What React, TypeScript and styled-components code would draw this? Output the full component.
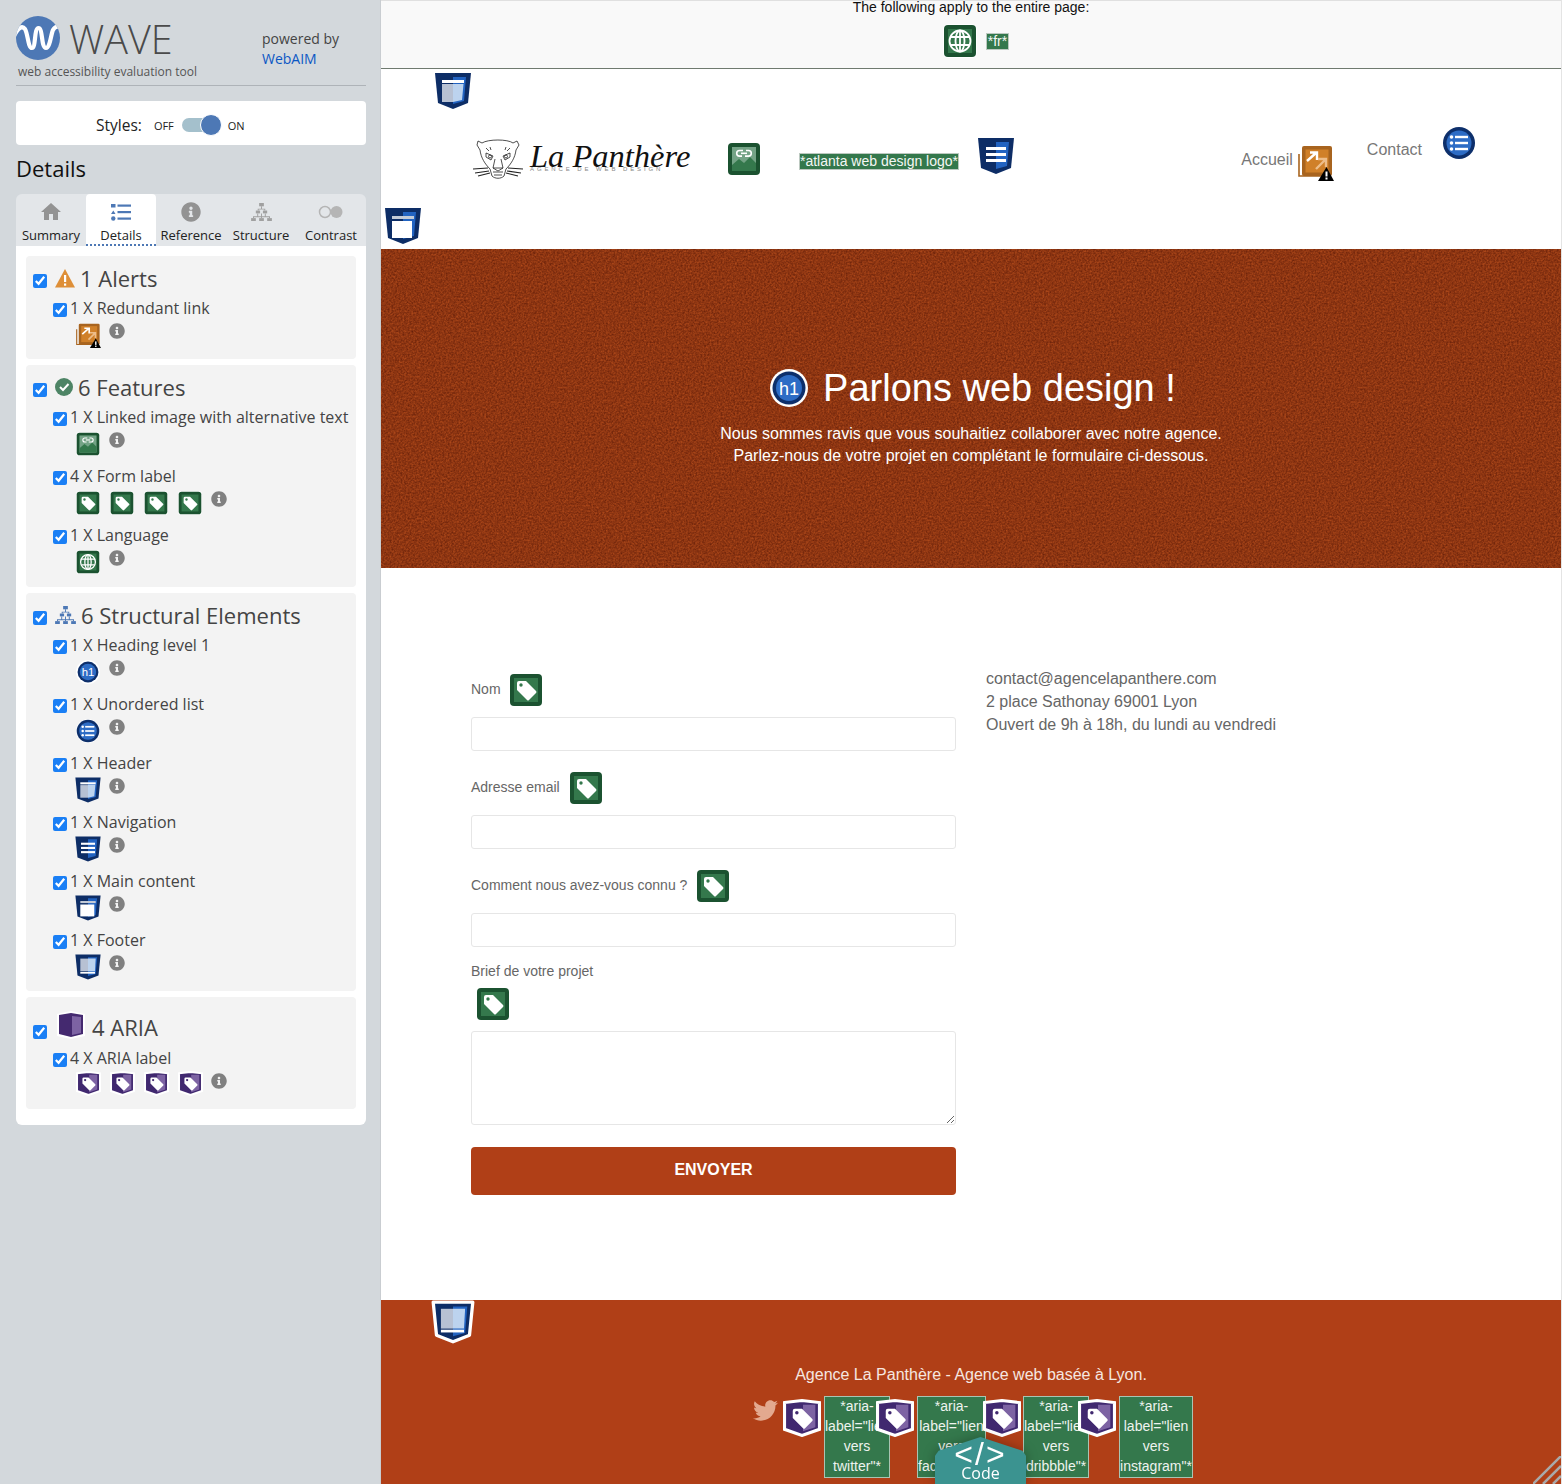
import React from 'react';
import styled, { createGlobalStyle } from 'styled-components';
import { FaInfoCircle, FaTwitter } from 'react-icons/fa';
import { MdHome } from 'react-icons/md';

const GlobalStyle = createGlobalStyle`
	html, body {
		margin: 0;
		padding: 0;
		height: 1484px;
		overflow: hidden;
		background: #fff;
	}
	* {
		box-sizing: border-box;
	}
	svg {
		flex: none;
	}
`;

const Page = styled.div`
	display: flex;
	width: 1562px;
	height: 1484px;
	overflow: hidden;
`;

/* ---------- icons ---------- */

type Size = { size: number };

const TagGlyph = ({ dot }: { dot: string }) => (
	<>
		<path d="M8 10a2 2 0 0 1 2-2h7l10 10q1 1 0 2l-7 7q-1 1-2 0L8 17z" fill="#fff" />
		<circle cx="12" cy="12" r="1.7" fill={dot} />
	</>
);

const Tile = ({ size, children }: Size & { children: React.ReactNode }) => (
	<svg width={size} height={size} viewBox="0 0 34 34" style={{ display: 'block' }}>
		<rect width="34" height="34" rx="5" fill="#fff" />
		<rect x="1" y="1" width="32" height="32" rx="4" fill="#1b5230" />
		<rect x="5" y="5" width="24" height="24" fill="#34784c" />
		{children}
	</svg>
);

const TagTile = ({ size }: Size) => (
	<Tile size={size}>
		<TagGlyph dot="#34784c" />
	</Tile>
);

const LinkTile = ({ size }: Size) => (
	<Tile size={size}>
		<rect x="5" y="5" width="24" height="24" fill="#74a386" />
		<path d="M5 29v-6l7-6 5 4 6-6 6 6v8z" fill="#34784c" />
		<g fill="none" stroke="#fff" strokeWidth="1.6">
			<path d="M16 8.500h-3.500a2.800 2.800 0 0 0 0 5.600H15" />
			<path d="M18 14.100h3.500a2.800 2.800 0 0 0 0-5.600H19" />
			<path d="M14 11.300h6" />
		</g>
	</Tile>
);

const GlobeTile = ({ size }: Size) => (
	<Tile size={size}>
		<g fill="none" stroke="#fff" strokeWidth="1.8">
			<circle cx="17" cy="17" r="10.5" />
			<ellipse cx="17" cy="17" rx="4.5" ry="10.5" />
			<path d="M17 6.5v21M7.5 13h19M7.5 21h19" />
		</g>
	</Tile>
);

type ShieldKind = 'header' | 'nav' | 'main' | 'footer';

const Shield = ({ size, kind, ring }: Size & { kind: ShieldKind; ring?: boolean }) => (
	<svg width={size} height={size} viewBox="-2 -2 40 40" style={{ display: 'block' }}>
		<path
			d="M0 0H36L33 30 18 36 3 30Z"
			fill="#0d2d66"
			stroke="#fff"
			strokeWidth={ring ? 3 : 0}
			strokeLinejoin="round"
		/>
		<path d="M18 4H31L29 28 18 31Z" fill="#2263c1" />
		{kind === 'header' && (
			<>
				<rect x="7" y="11" width="11" height="18" fill="#b7c1d3" />
				<path d="M18 11H28.500L27 27 18 29Z" fill="#bcd3ee" />
				<rect x="7" y="7" width="22" height="3" fill="#fff" />
			</>
		)}
		{kind === 'nav' && (
			<g fill="#fff">
				<rect x="8" y="9" width="20" height="3" />
				<rect x="8" y="15" width="20" height="3" />
				<rect x="8" y="21" width="20" height="3" />
			</g>
		)}
		{kind === 'main' && (
			<>
				<rect x="7" y="8" width="22" height="3" fill="#c3cbd8" />
				<rect x="7" y="13" width="20" height="17" fill="#fff" />
			</>
		)}
		{kind === 'footer' && (
			<>
				<rect x="7" y="6" width="11" height="18" fill="#b7c1d3" />
				<path d="M18 6H29L28 24H18Z" fill="#bcd3ee" />
				<rect x="7" y="25" width="21" height="2.500" fill="#fff" />
			</>
		)}
	</svg>
);

const AriaTag = ({ size }: Size) => (
	<svg width={size} height={size} viewBox="-1.500 -1.500 37 37" style={{ display: 'block' }}>
		<path d="M0 2 17 0 34 2V28L17 34 0 28Z" fill="#40286f" stroke="#fff" strokeWidth="3" strokeLinejoin="miter" />
		<path d="M18 4H30V26L18 30Z" fill="#7d63a3" />
		<TagGlyph dot="#40286f" />
	</svg>
);

const AriaCube = () => (
	<svg width="28" height="28" viewBox="0 0 28 28" style={{ display: 'block' }}>
		<path d="M0 3 14 0 28 3V25L14 28 0 25Z" fill="#fff" />
		<path d="M2 4 14 2V26L2 23Z" fill="#44296f" />
		<path d="M14 2 26 4V23L14 26Z" fill="#44296f" />
		<path d="M15 5 24 6V22L15 24Z" fill="#7d63a3" />
	</svg>
);

const ListCircle = ({ size }: Size) => (
	<svg width={size} height={size} viewBox="0 0 34 34" style={{ display: 'block' }}>
		<circle cx="17" cy="17" r="17" fill="#fff" />
		<circle cx="17" cy="17" r="16" fill="#0d2f6b" />
		<circle cx="17" cy="17" r="12.500" fill="#2d6cc5" />
		<g fill="#fff">
			<circle cx="9.500" cy="11" r="1.800" />
			<circle cx="9.500" cy="17" r="1.800" />
			<circle cx="9.500" cy="23" r="1.800" />
			<rect x="13" y="9.800" width="13" height="2.400" />
			<rect x="13" y="15.800" width="13" height="2.400" />
			<rect x="13" y="21.800" width="13" height="2.400" />
		</g>
	</svg>
);

const H1Circle = ({ size }: Size) => (
	<svg width={size} height={size} viewBox="0 0 38 38" style={{ display: 'block' }}>
		<circle cx="19" cy="19" r="19" fill="#fff" />
		<circle cx="19" cy="19" r="16.500" fill="#0d2f6b" />
		<circle cx="19" cy="19" r="13" fill="#2d6cc5" />
		<text x="19" y="25.500" textAnchor="middle" fontSize="18" fill="#fff" fontFamily="'Liberation Sans', Arial, sans-serif">
			h1
		</text>
	</svg>
);

const RedundantLink = ({ size }: Size) => (
	<svg width={size} height={size} viewBox="0 0 36 36" style={{ display: 'block' }}>
		<path d="M1 9V31H26" fill="none" stroke="#a8641f" strokeWidth="1.600" />
		<rect x="4" y="1" width="30" height="30" rx="2" fill="#a8641f" />
		<rect x="7.500" y="4.500" width="23" height="23" fill="#d08029" />
		<path d="M9 16 18 8M12 7.500H19V15" fill="none" stroke="#fff" strokeWidth="2.400" />
		<path d="M18 24 27 15M20 14H28V22" fill="none" stroke="#edbd8a" strokeWidth="2.400" />
		<path d="M28.500 22 36 36H20Z" fill="#000" />
		<rect x="27.500" y="26.500" width="2" height="5" fill="#fff" />
		<rect x="27.500" y="32.500" width="2" height="2" fill="#fff" />
	</svg>
);

const AlertTriangle = () => (
	<svg width="20" height="19" viewBox="0 0 20 19" style={{ display: 'block' }}>
		<path d="M10 0 20 18.500H0Z" fill="#de8f38" />
		<rect x="9" y="6" width="2.200" height="7" fill="#fff" />
		<rect x="9" y="14.500" width="2.200" height="2.200" fill="#fff" />
	</svg>
);

const CheckBadge = () => (
	<svg width="18" height="18" viewBox="0 0 18 18" style={{ display: 'block' }}>
		<circle cx="9" cy="9" r="9" fill="#4d8465" />
		<path d="M5 9l3 3 5.500-6" fill="none" stroke="#fff" strokeWidth="2" />
	</svg>
);

const TreeIcon = ({ color, width }: { color: string; width: number }) => (
	<svg width={width} height={width * 0.9} viewBox="0 0 22 20" style={{ display: 'block' }}>
		<g fill={color}>
			<rect x="8.500" y="0" width="5" height="3.500" />
			<rect x="5" y="8" width="4.500" height="3" />
			<rect x="12.500" y="8" width="4.500" height="3" />
			<rect x="0" y="16" width="5" height="3.500" />
			<rect x="8.500" y="16" width="5" height="3.500" />
			<rect x="17" y="16" width="5" height="3.500" />
			<path d="M10.500 3.500h1V6H15v2h-1V7H8v1H7V6h3.500zM2 14h18v2h-1v-1h-7.500v1h-1v-1H3v1H2zM10.500 11h1v3h-1zM6.500 11h1v3h-1zM14.500 11h1v3h-1z" />
		</g>
	</svg>
);

const ListIcon = () => (
	<svg width="20" height="17" viewBox="0 0 20 17" style={{ display: 'block' }}>
		<g fill="#4d78b5">
			<rect x="0" y="0" width="4.500" height="3.500" />
			<path d="M2.300 6.500 4.500 10H0Z" />
			<circle cx="2.300" cy="14.500" r="2.200" />
			<rect x="6.500" y="0.500" width="13.500" height="2.200" />
			<rect x="6.500" y="7" width="13.500" height="2.200" />
			<rect x="6.500" y="13.500" width="13.500" height="2.200" />
		</g>
	</svg>
);

const ContrastIcon = () => (
	<svg width="26" height="14" viewBox="0 0 26 14" style={{ display: 'block' }}>
		<circle cx="7" cy="7" r="5.500" fill="none" stroke="#b5b5b5" strokeWidth="1.500" />
		<circle cx="18.500" cy="7" r="6" fill="#b5b5b5" />
	</svg>
);

const WaveLogo = () => (
	<svg width="44" height="44" viewBox="0 0 44 44" style={{ display: 'block' }}>
		<defs>
			<clipPath id="wave-clip">
				<circle cx="22" cy="22" r="22" />
			</clipPath>
		</defs>
		<circle cx="22" cy="22" r="22" fill="#4d78b5" />
		<g clipPath="url(#wave-clip)">
			<path
				d="M-2 20C2 12 6 9 9 13 12 18 12 32 16 32 20 32 18 12 22.500 12 27 12 25 32 30 32 34 32 35 18 37 14 39 10 42 10 46 12"
				fill="none"
				stroke="#fff"
				strokeWidth="4.200"
			/>
		</g>
	</svg>
);

const PantherHead = () => (
	<svg width="52" height="42" viewBox="0 0 52 42" style={{ display: 'block' }}>
		<g fill="none" stroke="#222" strokeWidth="0.800">
			<path d="M10 5 6 3 5 7 8 12C9 20 13 26 18 31L20 38C23 41 29 41 32 38L34 31C39 26 43 20 44 12L47 7 45 3 41 5C36 1 16 1 10 5Z" />
			<path d="M14 15l7 3-2 4-5-3zM38 15l-7 3 2 4 5-3z" />
			<circle cx="18" cy="18.500" r="1.500" />
			<circle cx="34" cy="18.500" r="1.500" />
			<path d="M14 10l3 3M18 9l1 3M38 10l-3 3M34 9l-1 3M23 21l-2 9h10l-2-9M21 30l5 3 5-3M21 34h10M22 37h8" />
			<path d="M16 30 1 31M17 33 3 35M18 35 6 38M36 30l15 1M35 33l14 2M34 35l12 3" strokeWidth="1.100" />
		</g>
	</svg>
);

const InfoDot = styled(FaInfoCircle)`
	width: 16px;
	height: 16px;
	color: #808080;
	flex: none;
`;

/* ---------- sidebar ---------- */

const Sidebar = styled.aside`
	flex: none;
	width: 381px;
	height: 1484px;
	padding: 16px 14px 0 16px;
	background: #d3d8dc;
	border-right: 1px solid #c9cdd1;
	font-family: 'Open Sans', 'Liberation Sans', sans-serif;
	color: #3f3f3f;
`;

const Brand = styled.div`
	display: flex;
	justify-content: space-between;
	height: 70px;
	border-bottom: 1px solid #aeb3b8;
`;

const BrandMark = styled.div`
	width: 230px;
`;

const LogoRow = styled.div`
	display: flex;
	align-items: center;
	gap: 9px;
	height: 44px;
`;

const LogoWord = styled.span`
	margin-top: 2px;
	font-size: 39.500px;
	font-weight: 300;
	color: #4a4a4a;
	line-height: 44px;
`;

const Tagline = styled.div`
	margin: 4px 0 0 2px;
	font-size: 12px;
	line-height: 16px;
	color: #555;
`;

const Powered = styled.div`
	width: 104px;
	padding-top: 13px;
	font-size: 14px;
	line-height: 20px;
	color: #444;
`;

const PoweredLink = styled.a`
	display: block;
	color: #0b57c4;
`;

const StylesCard = styled.div`
	display: flex;
	align-items: center;
	height: 44px;
	margin-top: 15px;
	padding: 4px 0 0 80px;
	background: #fff;
	border-radius: 4px;
	color: #222;
	font-size: 15.500px;
`;

const SwitchText = styled.span<{ $left: number }>`
	margin-left: ${p => p.$left}px;
	font-size: 11px;
`;

const SwitchTrack = styled.span`
	position: relative;
	width: 38px;
	height: 14px;
	margin-left: 8px;
	background: #a4c0cc;
	border-radius: 7px;
`;

const SwitchKnob = styled.span`
	position: absolute;
	top: -4px;
	right: -2px;
	width: 22px;
	height: 22px;
	background: #4d78b5;
	border: 1px solid #fff;
	border-radius: 50%;
`;

const PanelTitle = styled.h2`
	margin: 8px 0 11px;
	font-size: 22px;
	line-height: 30px;
	font-weight: 400;
	color: #111;
`;

const Tabs = styled.div`
	display: flex;
	height: 52px;
	background: #e3e6e9;
	border-radius: 6px 6px 0 0;
`;

const Tab = styled.div<{ $active?: boolean }>`
	width: 70px;
	display: flex;
	flex-direction: column;
	align-items: center;
	padding-top: 8px;
	font-size: 13px;
	color: #222;
	background: ${p => (p.$active ? '#fff' : 'transparent')};
	border-radius: 4px 4px 0 0;
	border-bottom: ${p => (p.$active ? '2px dotted #4d78b5' : '2px solid transparent')};
`;

const TabIcon = styled.div`
	display: flex;
	align-items: center;
	justify-content: center;
	height: 20px;
	color: #939393;
`;

const TabLabel = styled.span`
	margin-top: 5px;
	line-height: 16px;
	white-space: nowrap;
`;

const Tree = styled.div`
	display: flex;
	flex-direction: column;
	gap: 6px;
	padding: 10px 10px 16px;
	background: #fff;
	border-radius: 0 0 6px 6px;
`;

const Group = styled.section<{ $foot?: number }>`
	padding: 8px 7px ${p => p.$foot || 3}px;
	background: #f3f3f3;
	border-radius: 4px;
`;

const GroupHeading = styled.h3<{ $tall?: boolean }>`
	display: flex;
	align-items: ${p => (p.$tall ? 'flex-end' : 'center')};
	height: ${p => (p.$tall ? 39 : 30)}px;
	margin: 0 0 3px;
	padding-bottom: 2px;
	font-size: 22px;
	line-height: 30px;
	font-weight: 400;
	color: #444;
`;

const Check = styled.input.attrs({ type: 'checkbox', defaultChecked: true })`
	flex: none;
	width: 14px;
	height: 14px;
	margin: 3px 0 0;
	accent-color: #1a7ff5;
`;

const HeadingCheck = styled(Check)`
	margin: 5px 8px 0 0;
`;

const TallCheck = styled(HeadingCheck)`
	margin: 0 10px 3px 0;
`;

const HeadingIcon = styled.span<{ $gap: number; $lift?: number }>`
	flex: none;
	margin-right: ${p => p.$gap}px;
	margin-bottom: ${p => p.$lift || 0}px;
`;

const Item = styled.div`
	height: 51px;
	margin: 0 0 8px 20px;
`;

const ItemRow = styled.div`
	display: flex;
	align-items: center;
	height: 22px;
	font-size: 16px;
	line-height: 22px;
	color: #444;
`;

const ItemText = styled.span`
	margin-left: 3px;
	white-space: nowrap;
`;

const IconRow = styled.div`
	display: flex;
	align-items: flex-start;
	gap: 10px;
	margin: 4px 0 0 23px;
`;

const IconSlot = styled.span`
	display: flex;
	justify-content: center;
	width: 24px;
	height: 25px;
`;

const RaisedSlot = styled.span`
	display: flex;
	justify-content: center;
	margin: -2px -2px 0 -2px;
`;

const ItemInfo = styled(InfoDot)`
	margin-left: -1px;
`;

type Entry = { text: string; icons: React.ReactNode[] };

const sidebarShield = (kind: ShieldKind) => (
	<RaisedSlot>
		<Shield size={28} kind={kind} />
	</RaisedSlot>
);

const sidebarAria = () => (
	<RaisedSlot>
		<AriaTag size={25} />
	</RaisedSlot>
);

const tags = [<TagTile size={24} />, <TagTile size={24} />, <TagTile size={24} />, <TagTile size={24} />];
const ariaTags = [sidebarAria(), sidebarAria(), sidebarAria(), sidebarAria()];

const EntryList = ({ entries }: { entries: Entry[] }) => (
	<>
		{entries.map(entry => (
			<Item key={entry.text}>
				<ItemRow>
					<Check />
					<ItemText>{entry.text}</ItemText>
				</ItemRow>
				<IconRow>
					{entry.icons.map((icon, i) => (
						<IconSlot key={i}>{icon}</IconSlot>
					))}
					<ItemInfo />
				</IconRow>
			</Item>
		))}
	</>
);

const alerts: Entry[] = [{ text: '1 X Redundant link', icons: [<RedundantLink size={25} />] }];
const features: Entry[] = [
	{ text: '1 X Linked image with alternative text', icons: [<LinkTile size={24} />] },
	{ text: '4 X Form label', icons: tags },
	{ text: '1 X Language', icons: [<GlobeTile size={24} />] },
];
const structure: Entry[] = [
	{ text: '1 X Heading level 1', icons: [<H1Circle size={24} />] },
	{ text: '1 X Unordered list', icons: [<ListCircle size={24} />] },
	{ text: '1 X Header', icons: [sidebarShield('header')] },
	{ text: '1 X Navigation', icons: [sidebarShield('nav')] },
	{ text: '1 X Main content', icons: [sidebarShield('main')] },
	{ text: '1 X Footer', icons: [sidebarShield('footer')] },
];
const aria: Entry[] = [{ text: '4 X ARIA label', icons: ariaTags }];

const WavePanel = () => (
	<Sidebar>
		<Brand>
			<BrandMark>
				<LogoRow>
					<WaveLogo />
					<LogoWord>WAVE</LogoWord>
				</LogoRow>
				<Tagline>web accessibility evaluation tool</Tagline>
			</BrandMark>
			<Powered>
				powered by
				<PoweredLink>WebAIM</PoweredLink>
			</Powered>
		</Brand>
		<StylesCard>
			Styles:
			<SwitchText $left={12}>OFF</SwitchText>
			<SwitchTrack>
				<SwitchKnob />
			</SwitchTrack>
			<SwitchText $left={8}>ON</SwitchText>
		</StylesCard>
		<PanelTitle>Details</PanelTitle>
		<Tabs>
			<Tab>
				<TabIcon>
					<MdHome size={24} />
				</TabIcon>
				<TabLabel>Summary</TabLabel>
			</Tab>
			<Tab $active>
				<TabIcon>
					<ListIcon />
				</TabIcon>
				<TabLabel>Details</TabLabel>
			</Tab>
			<Tab>
				<TabIcon>
					<FaInfoCircle size={20} />
				</TabIcon>
				<TabLabel>Reference</TabLabel>
			</Tab>
			<Tab>
				<TabIcon>
					<TreeIcon color="#a0a0a0" width={21} />
				</TabIcon>
				<TabLabel>Structure</TabLabel>
			</Tab>
			<Tab>
				<TabIcon>
					<ContrastIcon />
				</TabIcon>
				<TabLabel>Contrast</TabLabel>
			</Tab>
		</Tabs>
		<Tree>
			<Group>
				<GroupHeading>
					<HeadingCheck />
					<HeadingIcon $gap={5}>
						<AlertTriangle />
					</HeadingIcon>
					1 Alerts
				</GroupHeading>
				<EntryList entries={alerts} />
			</Group>
			<Group $foot={4}>
				<GroupHeading>
					<HeadingCheck />
					<HeadingIcon $gap={5} $lift={1}>
						<CheckBadge />
					</HeadingIcon>
					6 Features
				</GroupHeading>
				<EntryList entries={features} />
			</Group>
			<Group>
				<GroupHeading>
					<HeadingCheck />
					<HeadingIcon $gap={5}>
						<TreeIcon color="#4d78b5" width={21} />
					</HeadingIcon>
					6 Structural Elements
				</GroupHeading>
				<EntryList entries={structure} />
			</Group>
			<Group>
				<GroupHeading $tall>
					<TallCheck />
					<HeadingIcon $gap={7} $lift={3}>
						<AriaCube />
					</HeadingIcon>
					4 ARIA
				</GroupHeading>
				<EntryList entries={aria} />
			</Group>
		</Tree>
	</Sidebar>
);

/* ---------- evaluated page ---------- */

const Site = styled.main`
	position: relative;
	flex: 1;
	height: 1484px;
	overflow: hidden;
	font-family: 'Liberation Sans', Arial, sans-serif;
	border-right: 1px solid #e4e4e4;
`;

const DocBar = styled.div`
	height: 69px;
	background: #f9f9f9;
	border-top: 1px solid #e0e0e0;
	border-bottom: 1px solid #6f7a6f;
	text-align: center;
	font-size: 14px;
	line-height: 12px;
	color: #111;
`;

const DocIcons = styled.div`
	display: flex;
	align-items: center;
	justify-content: center;
	gap: 9px;
	margin-top: 11px;
	padding-left: 10px;
`;

const AltLabel = styled.span`
	display: inline-block;
	background: #34784c;
	border: 1px solid #bcc9c0;
	color: #f4f7f5;
	font-size: 14px;
	line-height: 15px;
	white-space: nowrap;
`;

const DocAlt = styled(AltLabel)`
	padding: 0 1px;
`;

const SiteHeader = styled.header`
	position: relative;
	display: flex;
	align-items: center;
	height: 180px;
	padding: 0 85px 0 91px;
`;

const Badge = styled.span<{ $left: number; $top: number }>`
	position: absolute;
	left: ${p => p.$left}px;
	top: ${p => p.$top}px;
`;

const SiteLogo = styled.div`
	display: flex;
	align-items: center;
	width: 218px;
	margin-right: 37px;
`;

const LogoText = styled.div`
	margin: 0 0 4px 6px;
	font-family: 'Liberation Serif', serif;
	font-style: italic;
	color: #111;
`;

const LogoName = styled.div`
	font-size: 32.500px;
	line-height: 30px;
	white-space: nowrap;
`;

const LogoSub = styled.div`
	margin-top: -5px;
	font-family: 'Liberation Sans', sans-serif;
	font-style: normal;
	font-size: 6px;
	line-height: 7px;
	letter-spacing: 2.900px;
	color: #888;
	white-space: nowrap;
`;

const HeaderAlt = styled(AltLabel)`
	margin: 4px 17px 0 38px;
`;

const NavBadge = styled.span`
	margin-bottom: 6px;
`;

const SiteNav = styled.nav`
	display: flex;
	margin-left: auto;
`;

const NavLink = styled.div<{ $gap: number; $lift: number; $space: number }>`
	display: flex;
	align-items: flex-start;
	gap: ${p => p.$gap}px;
	margin-left: ${p => p.$space}px;
	margin-top: ${p => p.$lift}px;
	font-size: 16px;
	color: #777;
`;

const NavText = styled.span<{ $drop: number }>`
	margin-top: ${p => p.$drop}px;
	line-height: 20px;
`;

const Hero = styled.section`
	display: flex;
	flex-direction: column;
	align-items: center;
	height: 319px;
	padding-top: 119px;
	background-color: #8f3612;
	background-image: url("data:image/svg+xml,%3Csvg xmlns='http://www.w3.org/2000/svg' width='400' height='400'%3E%3Cfilter id='n' color-interpolation-filters='sRGB'%3E%3CfeTurbulence type='fractalNoise' baseFrequency='0.55' numOctaves='3'/%3E%3CfeColorMatrix values='0.35 0 0 0 0.38 0.2 0 0 0 0.11 0.08 0 0 0 0.03 0 0 0 0 1'/%3E%3C/filter%3E%3Crect width='400' height='400' filter='url(%23n)'/%3E%3C/svg%3E");
	color: #fff;
	text-align: center;
`;

const HeroTitle = styled.h1`
	display: flex;
	align-items: center;
	gap: 15px;
	height: 40px;
	margin: 0 0 15px 4px;
	font-size: 38px;
	line-height: 40px;
	font-weight: 400;
`;

const HeroText = styled.p`
	margin: 0;
	font-size: 16px;
	line-height: 22px;
`;

const ContactSection = styled.section`
	display: flex;
	gap: 30px;
	height: 732px;
	padding: 105px 0 0 90px;
`;

const Form = styled.form`
	width: 485px;
`;

const LabelRow = styled.div<{ $gap?: number }>`
	display: flex;
	align-items: center;
	gap: ${p => p.$gap || 9}px;
	height: 34px;
	margin-bottom: 10px;
	font-size: 14px;
	color: #666;
`;

const LabelText = styled.span`
	margin-bottom: 2px;
`;

const StackedLabel = styled.div`
	margin-top: -4px;
	font-size: 14px;
	line-height: 16px;
	color: #666;
`;

const StackedIcon = styled.div`
	margin: 8px 0 10px 5px;
`;

const TextInput = styled.input`
	display: block;
	width: 100%;
	height: 34px;
	margin-bottom: 20px;
	background: #fff;
	border: 1px solid #e6e6e6;
	border-radius: 3px;
`;

const TextArea = styled.textarea`
	display: block;
	width: 100%;
	height: 94px;
	margin: 0 0 22px;
	background: #fff;
	border: 1px solid #e6e6e6;
	border-radius: 3px;
`;

const SendButton = styled.button`
	display: block;
	width: 100%;
	height: 48px;
	padding: 0 0 2px;
	background: #b03f17;
	border: 0;
	border-radius: 4px;
	color: #fff;
	font-family: 'Liberation Sans', Arial, sans-serif;
	font-size: 16px;
	font-weight: 700;
`;

const ContactInfo = styled.address`
	margin-top: -6px;
	font-style: normal;
	font-size: 16px;
	line-height: 23px;
	color: #666;
`;

const SiteFooter = styled.footer`
	position: relative;
	height: 184px;
	padding-top: 65px;
	background: #b03f17;
	color: #f6e7e0;
	font-size: 16px;
	line-height: 20px;
	text-align: center;
`;

const Socials = styled.div`
	display: flex;
	align-items: flex-start;
	margin-top: 11px;
	padding-left: 372px;
`;

const Bird = styled(FaTwitter)`
	flex: none;
	width: 25px;
	height: 25px;
	margin: 2px 5px 0 0;
	color: #e3a98f;
`;

const SocialTag = styled.span<{ $overlap: number; $after: number }>`
	position: relative;
	z-index: 1;
	flex: none;
	margin: 3px ${p => p.$after}px 0 -${p => p.$overlap}px;
`;

const SocialLabel = styled.div<{ $width: number }>`
	flex: none;
	width: ${p => p.$width}px;
	height: 82px;
	overflow: hidden;
	background: #34784c;
	border: 1px solid #a9c4b2;
	color: #eef3ef;
	font-size: 14px;
	line-height: 20px;
	white-space: nowrap;
	& > div:first-child {
		margin-top: -1px;
	}
`;

const CodeTab = styled.div`
	position: absolute;
	left: 554px;
	bottom: 0;
	z-index: 2;
	filter: drop-shadow(0 0 6px rgba(0, 0, 0, 0.3));
`;

const CodeShape = styled.div`
	width: 91px;
	height: 47px;
	padding-top: 2px;
	background: #3b9390;
	clip-path: polygon(0 100%, 0 40%, 4% 29%, 50% 0, 96% 29%, 100% 40%, 100% 100%);
	color: #fff;
	text-align: center;
	font-family: 'Open Sans', sans-serif;
`;

const CodeGlyph = styled.div`
	font-family: 'Liberation Sans', sans-serif;
	font-size: 32px;
	line-height: 31px;
	letter-spacing: 2px;
`;

const CodeWord = styled.div`
	margin-top: -7px;
	font-size: 16px;
	line-height: 20px;
`;

const ResizeGrip = styled.svg`
	position: absolute;
	right: 0;
	bottom: 0;
	z-index: 2;
	display: block;
`;

const socials = [
	{ width: 66, overlap: 0, after: 3, lines: ['*aria-', 'label="lien', 'vers', 'twitter"*'] },
	{ width: 69, overlap: 14, after: 3, lines: ['*aria-', 'label="lien', 'vers', 'facebook"*'] },
	{ width: 66, overlap: 3, after: 2, lines: ['*aria-', 'label="lien', 'vers', 'dribbble"*'] },
	{ width: 74, overlap: 11, after: 3, lines: ['*aria-', 'label="lien', 'vers', 'instagram"*'] },
];

const EvaluatedSite = () => (
	<Site>
		<DocBar>
			The following apply to the entire page:
			<DocIcons>
				<GlobeTile size={34} />
				<DocAlt>*fr*</DocAlt>
			</DocIcons>
		</DocBar>
		<SiteHeader>
			<Badge $left={52} $top={2}>
				<Shield size={40} kind="header" />
			</Badge>
			<Badge $left={2} $top={137}>
				<Shield size={40} kind="main" />
			</Badge>
			<SiteLogo>
				<PantherHead />
				<LogoText>
					<LogoName>La Panthère</LogoName>
					<LogoSub>AGENCE DE WEB DESIGN</LogoSub>
				</LogoText>
			</SiteLogo>
			<LinkTile size={34} />
			<HeaderAlt>*atlanta web design logo*</HeaderAlt>
			<NavBadge>
				<Shield size={40} kind="nav" />
			</NavBadge>
			<SiteNav>
				<NavLink $gap={5} $lift={8} $space={0}>
					<NavText $drop={5}>Accueil</NavText>
					<RedundantLink size={36} />
				</NavLink>
				<NavLink $gap={20} $lift={-11} $space={33}>
					<NavText $drop={14}>Contact</NavText>
					<ListCircle size={34} />
				</NavLink>
			</SiteNav>
		</SiteHeader>
		<Hero>
			<HeroTitle>
				<H1Circle size={38} />
				Parlons web design !
			</HeroTitle>
			<HeroText>
				Nous sommes ravis que vous souhaitiez collaborer avec notre agence.
				<br />
				Parlez-nous de votre projet en complétant le formulaire ci-dessous.
			</HeroText>
		</Hero>
		<ContactSection>
			<Form>
				<LabelRow $gap={8}>
					<LabelText>Nom</LabelText>
					<TagTile size={34} />
				</LabelRow>
				<TextInput />
				<LabelRow>
					<LabelText>Adresse email</LabelText>
					<TagTile size={34} />
				</LabelRow>
				<TextInput />
				<LabelRow>
					<LabelText>Comment nous avez-vous connu ?</LabelText>
					<TagTile size={34} />
				</LabelRow>
				<TextInput />
				<StackedLabel>Brief de votre projet</StackedLabel>
				<StackedIcon>
					<TagTile size={34} />
				</StackedIcon>
				<TextArea />
				<SendButton type="button">ENVOYER</SendButton>
			</Form>
			<ContactInfo>
				contact@agencelapanthere.com
				<br />
				2 place Sathonay 69001 Lyon
				<br />
				Ouvert de 9h à 18h, du lundi au vendredi
			</ContactInfo>
		</ContactSection>
		<SiteFooter>
			<Badge $left={50} $top={0}>
				<Shield size={44} kind="footer" ring />
			</Badge>
			Agence La Panthère - Agence web basée à Lyon.
			<Socials>
				<Bird />
				{socials.map(social => (
					<React.Fragment key={social.lines[3]}>
						<SocialTag $overlap={social.overlap} $after={social.after}>
							<AriaTag size={38} />
						</SocialTag>
						<SocialLabel $width={social.width}>
							{social.lines.map(line => (
								<div key={line}>{line}</div>
							))}
						</SocialLabel>
					</React.Fragment>
				))}
			</Socials>
			<CodeTab>
				<CodeShape>
					<CodeGlyph>&lt;/&gt;</CodeGlyph>
					<CodeWord>Code</CodeWord>
				</CodeShape>
			</CodeTab>
			<ResizeGrip width="28" height="28" viewBox="0 0 28 28">
				<g stroke="#a9a9a9" strokeWidth="2.500">
					<path d="M0 28 28 0M10 28 28 10M20 28 28 20" />
				</g>
			</ResizeGrip>
		</SiteFooter>
	</Site>
);

const App = () => (
	<Page>
		<GlobalStyle />
		<WavePanel />
		<EvaluatedSite />
	</Page>
);

export default App;
